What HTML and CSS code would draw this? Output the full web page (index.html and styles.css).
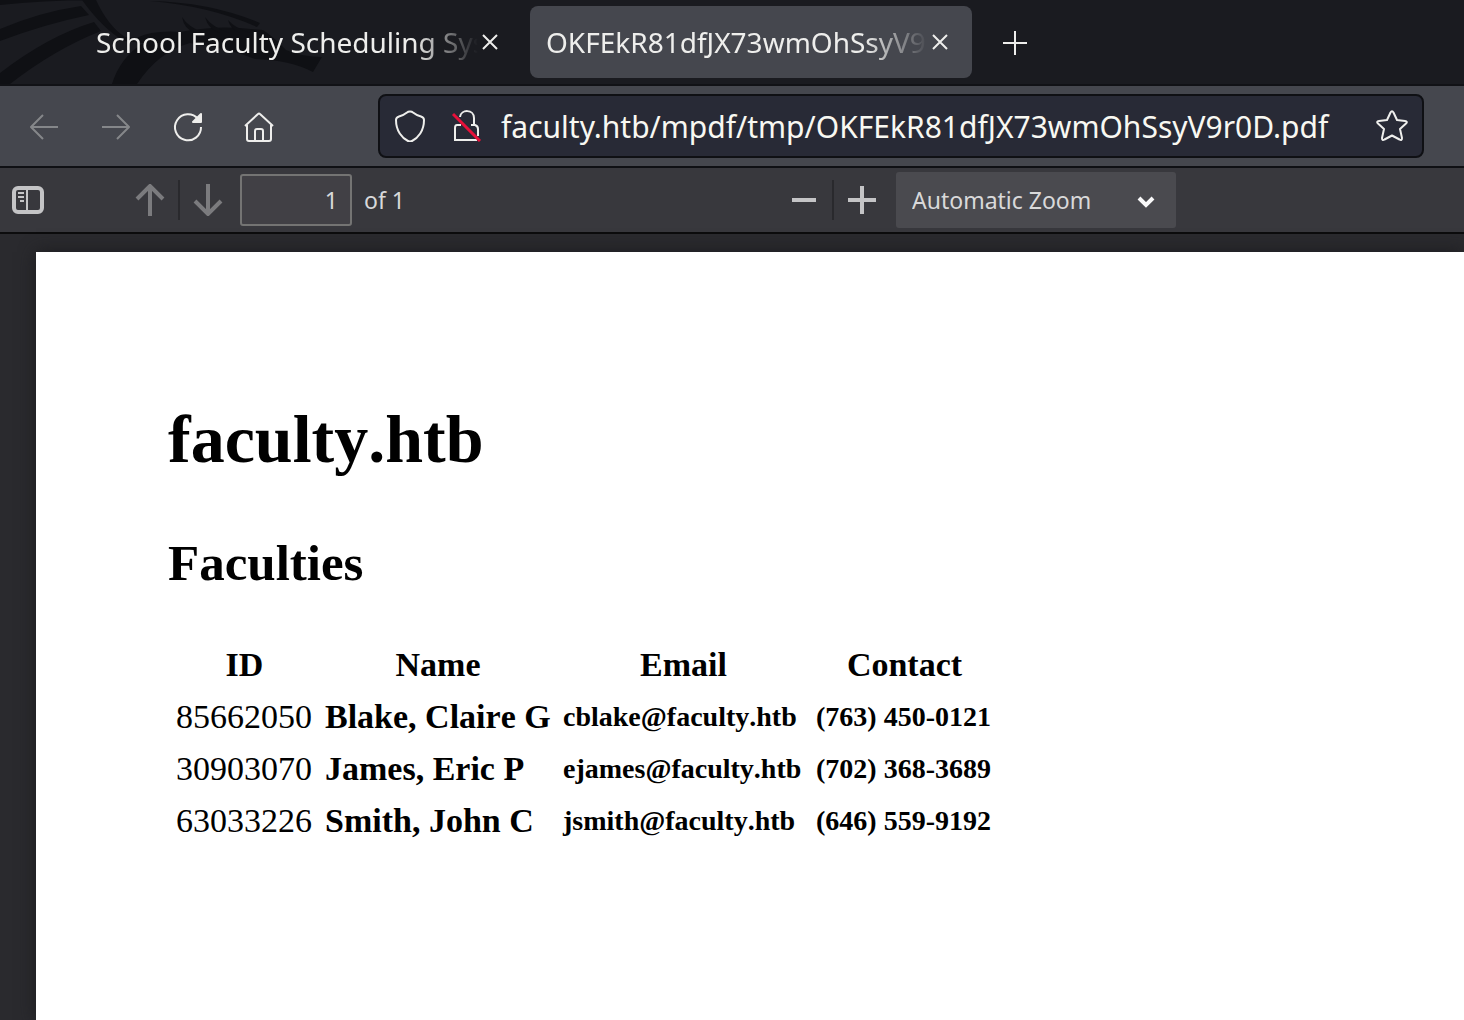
FILE: index.html
```html
<!DOCTYPE html>
<html lang="en">
<head>
<meta charset="utf-8">
<title>OKFEkR81dfJX73wmOhSsyV9r0D.pdf</title>
<link rel="stylesheet" href="styles.css">
</head>
<body>
<header class="tab-strip">
  <svg class="dragon" width="340" height="84" viewBox="0 0 340 84" aria-hidden="true">
    <path fill="#0f1014" d="M0 0H130Q60-1 0 5ZM0 29Q40 12 81 6L89 15Q45 24 0 41ZM0 73Q48 36 94 22L101 31Q55 49 10 84H0ZM82 0H96Q108 26 125 37L136 38Q154 30 180 32Q212 26 240 28L263 30Q275 38 286 50Q302 57 322 57L313 72Q290 60 255 59Q228 48 190 43Q158 52 137 84H112Q120 58 143 43L124 41Q103 29 82 0Z"/>
    <path fill="#0f1014" d="M150 1Q210 2 260 23L257 27Q210 6 150 1ZM182 17Q188 27 204 33H195Q184 29 182 17ZM205 17Q212 27 229 33H220Q208 29 205 17ZM228 20Q235 28 250 33H240Q230 29 228 20Z"/>
  </svg>
  <div class="tab">
    <a class="tab-title" href="#">School Faculty Scheduling System</a>
    <button class="tab-close" aria-label="Close tab"><svg width="18" height="18" viewBox="0 0 18 18"><path d="M2 2 16 16M16 2 2 16"/></svg></button>
  </div>
  <div class="tab tab-active">
    <a class="tab-title" href="#">OKFEkR81dfJX73wmOhSsyV9r0D.pdf</a>
    <button class="tab-close" aria-label="Close tab"><svg width="18" height="18" viewBox="0 0 18 18"><path d="M2 2 16 16M16 2 2 16"/></svg></button>
  </div>
  <button class="new-tab" aria-label="New tab"><svg width="24" height="24" viewBox="0 0 24 24"><path d="M12 0V24M0 12H24"/></svg></button>
</header>

<nav class="nav-bar">
  <div class="nav-buttons">
    <button class="nav-button dim" aria-label="Back"><svg width="32" height="32" viewBox="0 0 32 32"><path d="M30 16H3M15 4 3 16 15 28"/></svg></button>
    <button class="nav-button dim" aria-label="Forward"><svg width="32" height="32" viewBox="0 0 32 32"><path d="M2 16H29M17 4 29 16 17 28"/></svg></button>
    <button class="nav-button" aria-label="Reload"><svg width="32" height="32" viewBox="0 0 32 32"><path d="M29 16A13 13 0 1 1 26 8"/><path class="solid" d="M29 3V11H21Z"/></svg></button>
    <button class="nav-button" aria-label="Home"><svg width="32" height="32" viewBox="0 0 32 32"><path d="M1 15 14 3Q15 2 16 3L29 15M3 14V28Q3 30 5 30H25Q27 30 27 28V14M11 30V20Q11 18 13 18H17Q19 18 19 20V30"/></svg></button>
  </div>
  <div class="url-bar">
    <svg class="url-icon" width="32" height="32" viewBox="0 0 32 32"><path d="M16 1.500Q18 1.500 19 2.500 22 5 27 6.500 30 7.500 30 10C30 21 24 28 18 31Q16 32 14 31C8 28 2 21 2 10Q2 7.500 5 6.500 10 5 13 2.500 14 1.500 16 1.500Z"/></svg>
    <svg class="url-icon" width="32" height="32" viewBox="0 0 32 32"><path d="M10 7C11 -1 24 -1 24 8V15M11 15H7Q5 15 5 18V30H27M21 15H25Q28 16 28 19V26"/><path class="slash" d="M3 4 30 31"/></svg>
    <input class="url-input" type="text" aria-label="Address" value="faculty.htb/mpdf/tmp/OKFEkR81dfJX73wmOhSsyV9r0D.pdf">
    <button class="nav-button" aria-label="Bookmark this page"><svg width="32" height="32" viewBox="0 0 32 32"><path d="M14.500 2.500Q16 0 17.500 2.500L21 10 29 11Q32 11.500 30 13.500L24 19 26 28Q26 31 23.500 29.500L16 25.500 8.500 29.500Q6 31 6 28L8 19 2 13.500Q0 11.500 3 11L11 10Z"/></svg></button>
  </div>
</nav>

<div class="pdf-bar">
  <button class="tool sidebar-toggle" aria-label="Toggle sidebar"><svg width="32" height="28" viewBox="0 0 32 28"><rect x="2" y="2" width="28" height="24" rx="4" stroke-width="4"/><path stroke-width="2" d="M15 3V25M6 7H12M6 11H12M8 15H12"/></svg></button>
  <div class="pager">
    <button class="tool muted" aria-label="Previous page"><svg width="32" height="32" viewBox="0 0 32 32"><path d="M16 32V2M3 15 16 2 29 15"/></svg></button>
    <span class="divider"></span>
    <button class="tool muted" aria-label="Next page"><svg width="32" height="32" viewBox="0 0 32 32"><path d="M16 0V30M3 17 16 30 29 17"/></svg></button>
    <input class="page-number" id="page-number" type="text" value="1">
    <label for="page-number">of 1</label>
  </div>
  <div class="zoom">
    <button class="tool" aria-label="Zoom out"><svg width="28" height="28" viewBox="0 0 28 28"><path d="M2 14H26"/></svg></button>
    <span class="divider"></span>
    <button class="tool" aria-label="Zoom in"><svg width="28" height="28" viewBox="0 0 28 28"><path d="M14 0V28M0 14H28"/></svg></button>
    <div class="select-box">
      <select aria-label="Zoom level"><option>Automatic Zoom</option></select>
      <svg class="chevron" width="18" height="12" viewBox="0 0 18 12"><path d="M2 2 9 9 16 2"/></svg>
    </div>
  </div>
</div>

<main class="viewer">
  <article class="sheet">
    <h1>faculty.htb</h1>
    <h2>Faculties</h2>
    <table>
      <colgroup><col class="col-id"><col class="col-name"><col class="col-email"><col class="col-contact"></colgroup>
      <thead><tr><th>ID</th><th>Name</th><th>Email</th><th>Contact</th></tr></thead>
      <tbody>
        <tr><td>85662050</td><td class="name">Blake, Claire G</td><td class="detail">cblake@faculty.htb</td><td class="detail">(763) 450-0121</td></tr>
        <tr><td>30903070</td><td class="name">James, Eric P</td><td class="detail">ejames@faculty.htb</td><td class="detail">(702) 368-3689</td></tr>
        <tr><td>63033226</td><td class="name">Smith, John C</td><td class="detail">jsmith@faculty.htb</td><td class="detail">(646) 559-9192</td></tr>
      </tbody>
    </table>
  </article>
</main>
</body>
</html>
```
FILE: styles.css
```css
* { box-sizing: border-box; }

body {
  margin: 0;
  min-height: 100vh;
  display: flex;
  flex-direction: column;
  overflow: hidden;
  background: #2a2a2e;
  color: #eeeeec;
  font: 28px/36px "Noto Sans", sans-serif;
}

button, input, select {
  margin: 0;
  padding: 0;
  border: 0;
  background: none;
  color: inherit;
  font: inherit;
}

button { display: grid; place-items: center; flex: none; }
svg { display: block; flex: none; fill: none; stroke: currentColor; stroke-width: 2; }
.solid { fill: currentColor; }

.tab-strip {
  position: relative;
  display: flex;
  align-items: center;
  height: 86px;
  padding-left: 80px;
  border-bottom: 2px solid #111216;
  background: #1a1b20;
}
.dragon { position: absolute; left: 0; top: 0; stroke: none; }

.tab {
  position: relative;
  display: flex;
  align-items: center;
  width: 442px;
  height: 72px;
  margin-right: 8px;
  padding: 0 20px 0 16px;
  border-radius: 8px;
}
.tab-active { background: #45474e; }
.tab-title {
  flex: 1;
  overflow: hidden;
  white-space: nowrap;
  color: inherit;
  text-decoration: none;
  mask-image: linear-gradient(to right, #000 calc(100% - 64px), transparent);
}
.tab-close { width: 24px; height: 24px; }
.new-tab { width: 40px; height: 40px; margin-left: 15px; padding-top: 2px; }

.nav-bar {
  display: flex;
  align-items: center;
  height: 82px;
  padding: 0 40px 0 28px;
  border-bottom: 2px solid #0f1014;
  background: #45474e;
}
.nav-buttons { display: flex; gap: 40px; width: 350px; padding-top: 2px; }
.nav-button { width: 32px; height: 32px; }
.nav-button svg { stroke-linejoin: round; }
.nav-button.dim { color: #85878a; }

.url-bar {
  display: flex;
  align-items: center;
  flex: 1;
  height: 64px;
  padding: 0 14px;
  border: 2px solid #0f1014;
  border-radius: 8px;
  background: #282a36;
}
.url-icon { margin-right: 24px; }
.url-icon + .url-icon { margin-right: 19px; }
.slash { stroke: #e8103a; stroke-width: 3; }
.url-input { flex: 1; min-width: 0; height: 44px; color: #f8f8f2; font-size: 30px; }

.pdf-bar {
  display: flex;
  align-items: center;
  height: 66px;
  padding-left: 12px;
  border-bottom: 2px solid #0c0c0d;
  background: #38383d;
  color: #d9d9da;
  font-size: 23px;
}
.tool { width: 32px; height: 32px; color: #c4c4c6; }
.tool svg { stroke-width: 4; }
.sidebar-toggle svg { stroke-width: 2; }
.muted { color: #7b7b7e; }
.divider { flex: none; width: 2px; height: 40px; background: #29292d; }
.pager { display: flex; align-items: center; gap: 12px; width: 270px; margin-left: 90px; white-space: nowrap; }
.page-number {
  width: 112px;
  height: 52px;
  margin-left: 4px;
  padding-right: 12px;
  border: 2px solid #747473;
  border-radius: 3px;
  background: #414045;
  text-align: right;
}
.zoom { display: flex; align-items: center; gap: 12px; margin-left: 384px; }
.select-box {
  position: relative;
  width: 280px;
  height: 56px;
  margin-left: 6px;
  border-radius: 3px;
  background: #4a4a4f;
}
.select-box select { width: 100%; height: 100%; padding: 0 16px; appearance: none; }
.chevron { position: absolute; right: 21px; top: 24px; color: #f9f9fa; stroke-width: 4; pointer-events: none; }

.viewer { display: flex; flex: 1; padding: 18px 0 0 36px; }
.sheet {
  flex: 1;
  padding: 147px 132px 0;
  background: #fff;
  box-shadow: 0 0 16px #1c1c1e;
  color: #000;
  font-family: "Liberation Serif", serif;
  font-kerning: none;
}
h1 { margin: 0 0 54px; font-size: 68px; line-height: 80px; }
h2 { margin: 0 0 46px; font-size: 51px; line-height: 60px; }
table { table-layout: fixed; width: 829px; margin-left: 2px; border-collapse: collapse; font-size: 34px; line-height: 52px; }
.col-id { width: 149px; }
.col-name { width: 238px; }
.col-email { width: 253px; }
.col-contact { width: 189px; }
th, td { height: 52px; padding: 0 6px; white-space: nowrap; }
.name { font-weight: 700; }
.detail { font-size: 28px; font-weight: 700; }
```
